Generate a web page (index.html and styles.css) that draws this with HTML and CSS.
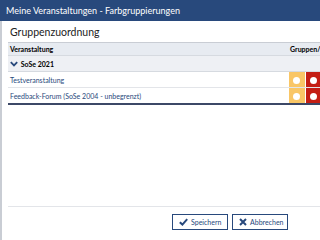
FILE: index.html
```html
<!DOCTYPE html>
<html lang="de">
<head>
  <meta charset="UTF-8" />
  <title>Farbgruppierungen</title>
  <link rel="stylesheet" href="styles.css">
</head>
<body>

  <div class="titlebar">Meine Veranstaltungen - Farbgruppierungen</div>

  <div class="dialog">
    <div class="content">
      <table class="groups">
        <colgroup>
          <col class="col-name">
          <col class="col-color">
          <col class="col-color">
          <col class="col-rest">
        </colgroup>
        <caption>Gruppenzuordnung</caption>
        <thead>
          <tr>
            <th class="name">Veranstaltung</th>
            <th class="gruppen" colspan="3">Gruppen/Farbe</th>
          </tr>
        </thead>
        <tbody>
          <tr class="semester">
            <th colspan="4">
              <svg width="8" height="6" viewBox="0 0 8 6"><path d="M0.8 1.2 L4 4.4 L7.2 1.2" fill="none" stroke="#28497c" stroke-width="1.8"/></svg>
              SoSe 2021
            </th>
          </tr>
          <tr>
            <td class="name"><a href="#">Testveranstaltung</a></td>
            <td class="color yellow"><span class="dot"></span></td>
            <td class="color red"><span class="dot"></span></td>
            <td class="color green"><span class="dot"></span></td>
          </tr>
          <tr>
            <td class="name"><a href="#">Feedback-Forum (SoSe 2004 - unbegrenzt)</a></td>
            <td class="color yellow"><span class="dot"></span></td>
            <td class="color red"><span class="dot"></span></td>
            <td class="color green"><span class="dot"></span></td>
          </tr>
        </tbody>
      </table>
    </div>

    <div class="buttons">
      <button class="btn">
        <svg width="9" height="8" viewBox="0 0 9 8"><path d="M0.8 4.2 L3.4 6.6 L8.2 1.2" fill="none" stroke="#28497c" stroke-width="2"/></svg>
        Speichern
      </button>
      <button class="btn">
        <svg width="8" height="8" viewBox="0 0 8 8"><path d="M1 1 L7 7 M7 1 L1 7" fill="none" stroke="#28497c" stroke-width="2"/></svg>
        Abbrechen
      </button>
    </div>
  </div>

</body>
</html>
```

FILE: styles.css
```css
body {
  font-family: Lato, 'Liberation Sans', sans-serif;
  background-color: #fff;
  color: #000;
  margin: 0;
  padding: 0;
  width: 320px;
  height: 240px;
  overflow: hidden;
}

.titlebar {
  background-color: #28497c;
  color: #fff;
  font-size: 9px;
  height: 21px;
  line-height: 21px;
  padding-left: 6px;
  white-space: nowrap;
}

.dialog {
  border-left: 2px solid #c9cdd4;
  height: 219px;
  width: 444px;
  display: flex;
  flex-direction: column;
  padding-left: 6px;
}

.content {
  height: 185px;
  overflow: hidden;
}

table.groups {
  table-layout: fixed;
  width: 360px;
  border-collapse: collapse;
  border-bottom: 2px solid #3c4867;
}

col.col-name {
  width: 280px;
}

col.col-color {
  width: 17px;
}

col.col-rest {
  width: 46px;
}

table.groups caption {
  text-align: left;
  font-size: 10.5px;
  color: #222;
  padding: 5px 0 4px 2px;
  border-bottom: 1px solid #c9cdd4;
}

table.groups thead th {
  background-color: #e7ebf1;
  font-size: 7px;
  font-weight: bold;
  text-align: left;
  height: 12px;
  padding: 0 2px;
  white-space: nowrap;
  overflow: hidden;
  border-bottom: 1px solid #d6dae0;
}

tr.semester th {
  background-color: #eef0f4;
  font-size: 7px;
  font-weight: bold;
  text-align: left;
  height: 15px;
  padding: 0 2px;
  border-bottom: 1px solid #d6dae0;
}

tr.semester svg {
  margin-right: 1px;
}

table.groups td {
  height: 15px;
  font-size: 7px;
  padding: 0;
  border-bottom: 1px solid #e3e5e9;
}

td.name {
  padding-left: 2px !important;
  white-space: nowrap;
}

td.name a {
  color: #28497c;
  text-decoration: none;
}

td.color {
  text-align: center;
  border-left: 1px solid #fff;
}

td.yellow {
  background-color: #f9c666;
}

td.red {
  background-color: #c41e14;
}

td.green {
  background-color: #6ead35;
}

.dot {
  display: inline-block;
  width: 7px;
  height: 7px;
  border-radius: 50%;
  background-color: #fff;
  vertical-align: middle;
}

.buttons {
  border-top: 1px solid #e3e5e9;
  padding-top: 7px;
  display: flex;
  justify-content: center;
  gap: 4px;
}

.btn {
  font-family: Lato, 'Liberation Sans', sans-serif;
  background-color: #fff;
  color: #28497c;
  border: 1px solid #28497c;
  font-size: 7px;
  width: 56px;
  height: 16px;
  padding: 0 0 0 6px;
  display: flex;
  align-items: center;
  gap: 3px;
  cursor: pointer;
}
```
